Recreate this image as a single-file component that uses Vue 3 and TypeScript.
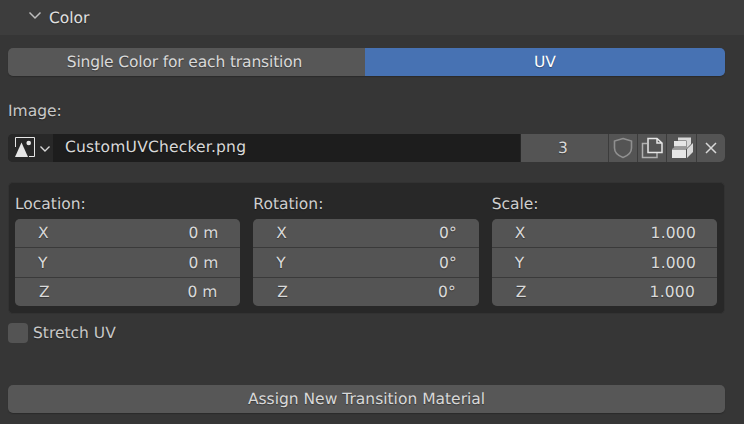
<script setup lang="ts">
interface Axis { axis: string; value: string }
interface Group { title: string; kind: string; rows: Axis[] }
const groups: Group[] = [
  { title: 'Location:', kind: 'short', rows: [{ axis: 'X', value: '0 m' }, { axis: 'Y', value: '0 m' }, { axis: 'Z', value: '0 m' }] },
  { title: 'Rotation:', kind: 'short', rows: [{ axis: 'X', value: '0°' }, { axis: 'Y', value: '0°' }, { axis: 'Z', value: '0°' }] },
  { title: 'Scale:', kind: 'long', rows: [{ axis: 'X', value: '1.000' }, { axis: 'Y', value: '1.000' }, { axis: 'Z', value: '1.000' }] },
]
</script>

<template>
  <div class="panel">
    <header class="head">
      <svg class="chev" width="14" height="10" viewBox="0 0 14 10"><path d="M1.5 1.5 L7 7 L12.5 1.5" fill="none" stroke="#bdbdbd" stroke-width="1.5" /></svg>
      <span>Color</span>
    </header>
    <main class="body">
      <div class="seg">
        <div class="seg-off">Single Color for each transition</div>
        <div class="seg-on">UV</div>
      </div>
      <div class="img-label">Image:</div>
      <div class="img-row">
        <div class="picker">
          <svg width="23" height="22" viewBox="0 0 23 22">
            <path d="M2.5 10 V0.5 H21.5 V19.5 H16" fill="none" stroke="#e6e6e6" stroke-width="1" />
            <circle cx="15.7" cy="6" r="2.3" fill="#e6e6e6" />
            <path d="M2 20 L8.5 5.5 L15 20 Z" fill="#e6e6e6" />
          </svg>
          <svg class="drop" width="12" height="8" viewBox="0 0 12 8"><path d="M1.5 1.5 L6 6 L10.5 1.5" fill="none" stroke="#d8d8d8" stroke-width="1.4" /></svg>
        </div>
        <div class="name">CustomUVChecker.png</div>
        <div class="users">3</div>
        <div class="ic">
          <svg width="20" height="22" viewBox="0 0 20 22"><path d="M10 1.5 L18.5 4 V11 C18.5 16 14 19 10 20.5 C6 19 1.5 16 1.5 11 V4 Z" fill="none" stroke="#8f8f8f" stroke-width="1.6" /></svg>
        </div>
        <div class="ic">
          <svg width="22" height="22" viewBox="0 0 22 22">
            <path d="M6 6.5 H1.5 V20.5 H16 V16" fill="none" stroke="#b0b0b0" stroke-width="1.5" />
            <path d="M7 1.5 H16 L21 6 V15.5 H7 Z M16 1.5 V6 H21" fill="none" stroke="#e6e6e6" stroke-width="1.5" />
          </svg>
        </div>
        <div class="ic wide">
          <svg width="22" height="22" viewBox="0 0 22 22">
            <path d="M7 0.5 H20 V7 L17 10 H15.5 V3.5 H7 Z" fill="#d8d8d8" />
            <path d="M3 4 H15 V9.5 H3 Z" fill="#e6e6e6" />
            <path d="M1 12.5 H15 V21 H1 Z" fill="#e6e6e6" />
            <path d="M1 12 L3.5 10 H18 L15.5 12 Z" fill="#9a9a9a" />
            <path d="M16 12 L22 6 V15 L16 21 Z" fill="#d8d8d8" />
          </svg>
        </div>
        <div class="ic">
          <svg width="14" height="14" viewBox="0 0 14 14"><path d="M2 2 L12 12 M12 2 L2 12" stroke="#d8d8d8" stroke-width="1.5" /></svg>
        </div>
      </div>
      <section class="box">
        <div v-for="g in groups" :key="g.title" class="col" :class="g.kind">
          <div class="col-title">{{ g.title }}</div>
          <div class="stack">
            <div v-for="r in g.rows" :key="r.axis" class="row">
              <span>{{ r.axis }}</span><span class="val">{{ r.value }}</span>
            </div>
          </div>
        </div>
      </section>
      <label class="check"><span class="tick"></span><span>Stretch UV</span></label>
      <div class="assign">Assign New Transition Material</div>
    </main>
  </div>
</template>

<style>
html, body { margin: 0; background: #363636; }
</style>

<style scoped>
.panel { width: 744px; height: 424px; overflow: hidden; background: #363636; color: #d9d9d9; font-family: "DejaVu Sans", sans-serif; font-size: 15.5px; text-rendering: geometricPrecision; text-shadow: 0 1px 1px rgba(0,0,0,.35); }
.head { height: 35px; background: #3d3d3d; display: flex; align-items: center; gap: 7px; padding-left: 28px; box-sizing: border-box; color: #e0e0e0; }
.chev { margin-top: -3px; }
.body { padding: 13px 19px 0 8px; }
.seg { display: flex; height: 28px; line-height: 29px; text-align: center; border-radius: 5px; overflow: hidden; box-shadow: 0 1px 1px #2b2b2b; }
.seg-off { width: 357px; background: #575757; letter-spacing: -0.15px; padding-right: 4px; box-sizing: border-box; }
.seg-on { flex: 1; background: #4772b3; color: #fff; }
.img-label { margin-top: 24px; height: 20px; line-height: 22px; color: #c8c8c8; }
.img-row { display: flex; margin-top: 14px; height: 28px; background: #282828; border-radius: 5px; overflow: hidden; }
.picker { width: 45px; background: #282828; display: flex; align-items: center; gap: 3px; padding-left: 5px; box-sizing: border-box; }
.drop { margin-top: 1px; }
.name { width: 467px; background: #1d1d1d; padding-left: 12px; box-sizing: border-box; line-height: 27px; letter-spacing: 0.2px; }
.users { width: 87px; background: #545454; text-align: center; line-height: 28px; margin-left: 1px; padding-right: 3px; box-sizing: border-box; }
.ic { width: 29px; background: #545454; display: flex; align-items: center; justify-content: center; border-left: 1px solid #3c3c3c; box-sizing: border-box; }
.ic.wide { width: 30px; }
.box { margin-top: 20px; height: 132px; box-sizing: border-box; background: #282828; border: 1px solid #323232; border-radius: 5px; display: flex; gap: 13px; padding: 0 7px 0 6px; }
.col { flex: 1; }
.col-title { height: 36px; line-height: 42px; color: #cfcfcf; }
.stack { border-radius: 5px; overflow: hidden; background: #3a3a3a; display: flex; flex-direction: column; gap: 1px; }
.row { height: 28.4px; background: #545454; display: flex; justify-content: space-between; align-items: center; padding: 0 22px 0 23px; }
.row:nth-child(3) { padding: 0 23px 0 24px; }
.long .row { padding-right: 21px; }
.long .row:nth-child(3) { padding-right: 22px; }
.long .val { letter-spacing: 0.2px; }
.check { display: flex; align-items: center; gap: 5px; margin-top: 9px; height: 20px; color: #c8c8c8; }
.tick { width: 20px; height: 20px; border-radius: 4px; background: #545454; }
.assign { margin-top: 42px; height: 28px; line-height: 28px; text-align: center; background: #575757; border-radius: 5px; box-shadow: 0 1px 1px #2b2b2b; }
</style>
